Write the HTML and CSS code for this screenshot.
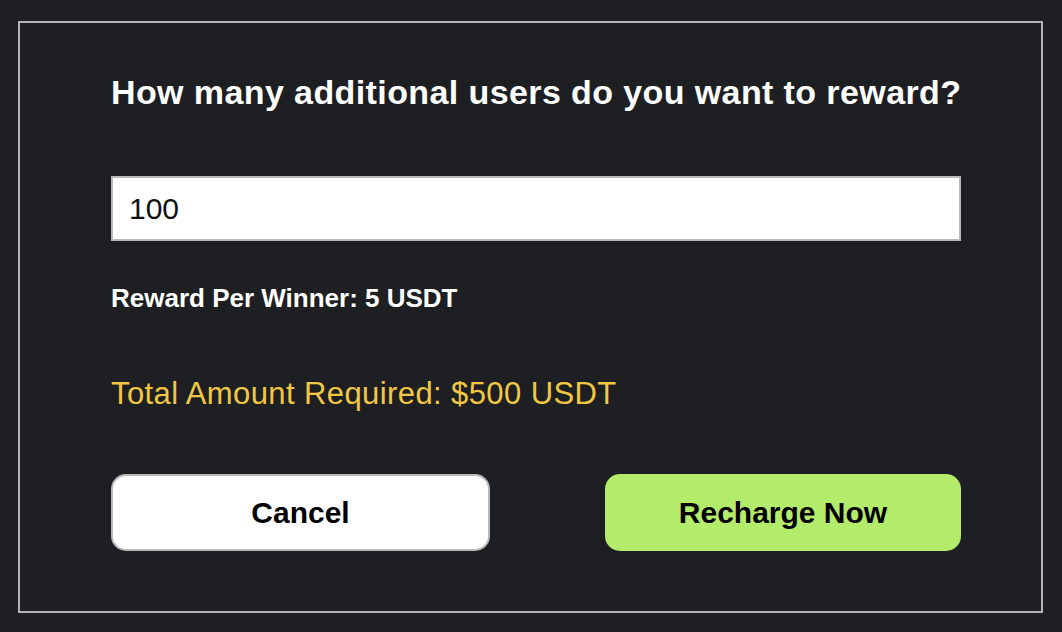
FILE: index.html
```html
<!DOCTYPE html>
<html>
<head>
<meta charset="utf-8">
<link rel="stylesheet" href="styles.css">
</head>
<body>
<div class="frame">
  <h1 class="title">How many additional users do you want to reward?</h1>
  <input class="field" type="text" value="100">
  <p class="per">Reward Per Winner: 5 USDT</p>
  <p class="total">Total Amount Required: $500 USDT</p>
  <div class="actions">
    <button class="btn btn-cancel">Cancel</button>
    <button class="btn btn-go">Recharge Now</button>
  </div>
</div>
</body>
</html>
```
FILE: styles.css
```css
html, body {
  margin: 0;
  background: #1e1f23;
  height: 100%;
}
body {
  padding: 21px 0 0 18px;
  box-sizing: border-box;
  font-family: "Liberation Sans", Arial, sans-serif;
}
.frame {
  width: 1025px;
  height: 592px;
  box-sizing: border-box;
  border: 2px solid #b4b4b6;
  padding: 49px 80px 0 91px;
  display: flex;
  flex-direction: column;
}
.title {
  margin: 0;
  color: #fff;
  font-size: 34px;
  font-weight: bold;
  letter-spacing: 0.4px;
  line-height: 40px;
  height: 40px;
  white-space: nowrap;
}
.field {
  margin-top: 64px;
  width: 850px;
  height: 65px;
  box-sizing: border-box;
  border: 2px solid #b9b9bb;
  background: #fff;
  padding: 0 0 0 16px;
  font-family: "Liberation Sans", Arial, sans-serif;
  font-size: 30px;
  color: #111;
  outline: none;
}
.per {
  margin: 42px 0 0;
  color: #fff;
  font-size: 26px;
  font-weight: bold;
  line-height: 30px;
}
.total {
  margin: 63px 0 0;
  color: #f2c744;
  font-size: 31px;
  letter-spacing: 0.4px;
  line-height: 36px;
}
.actions {
  margin-top: 62px;
  display: flex;
  justify-content: space-between;
  width: 850px;
}
.btn {
  height: 77px;
  border-radius: 15px;
  font-family: "Liberation Sans", Arial, sans-serif;
  font-size: 30px;
  font-weight: bold;
  color: #000;
  cursor: pointer;
}
.btn-cancel {
  width: 379px;
  background: #fff;
  border: 2px solid #b9b9bb;
}
.btn-go {
  width: 356px;
  background: #b3ec6a;
  border: none;
}
```
